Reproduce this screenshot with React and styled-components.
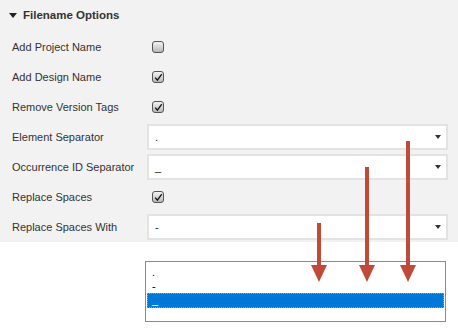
import React from "react";
import styled, { createGlobalStyle } from "styled-components";

const Global = createGlobalStyle`
  html, body {
    margin: 0;
    padding: 0;
    background: #ffffff;
  }
  body {
    font-family: "Liberation Sans", Arial, sans-serif;
  }
`;

const Page = styled.div`
  position: relative;
  width: 458px;
  height: 331px;
  overflow: hidden;
`;

const Panel = styled.div`
  background: #f2f2f2;
  padding: 0 10px 0 12px;
  height: 242px;
  box-sizing: border-box;
`;

const Header = styled.div`
  display: flex;
  align-items: center;
  height: 32px;
  padding-bottom: 2px;
  box-sizing: border-box;
  margin-left: -3px;
  gap: 6px;
  font-size: 11.5px;
  font-weight: bold;
  color: #333333;
`;

const Caret = styled.span`
  width: 0;
  height: 0;
  border-left: 4px solid transparent;
  border-right: 4px solid transparent;
  border-top: 5px solid #222222;
  margin-top: 1px;
`;

const Row = styled.div`
  display: grid;
  grid-template-columns: 135px 1fr;
  align-items: center;
  height: 30px;
`;

const Label = styled.span`
  font-size: 11px;
  color: #333333;
`;

const Check = styled.span`
  width: 12px;
  height: 12px;
  margin-left: 5px;
  box-sizing: border-box;
  border: 1px solid #555555;
  border-radius: 3px;
  background: linear-gradient(#f4f4f4, #b8b8b8);
  display: flex;
  align-items: center;
  justify-content: center;
`;

const Select = styled.div`
  height: 26px;
  box-sizing: border-box;
  border: 2px solid #e3e3e3;
  background: #ffffff;
  display: flex;
  align-items: center;
  justify-content: space-between;
  padding: 0 5px 0 6px;
  font-size: 11px;
  color: #222222;
`;

const Arrow = styled.span`
  width: 0;
  height: 0;
  border-left: 3.5px solid transparent;
  border-right: 3.5px solid transparent;
  border-top: 4px solid #333333;
`;

const ListArea = styled.div`
  padding: 19px 0 0 145px;
`;

const ListBox = styled.div`
  width: 301px;
  height: 61px;
  box-sizing: border-box;
  border: 1px solid #8a8a8a;
  background: #ffffff;
  padding: 3px 1px;
  display: flex;
  flex-direction: column;
`;

const Option = styled.div`
  height: ${p => (p.selected ? "15px" : "14px")};
  box-sizing: border-box;
  padding-left: 4px;
  font-size: 11px;
  line-height: 13px;
  color: ${p => (p.selected ? "#ffffff" : "#000000")};
  background: ${p => (p.selected ? "#0078d7" : "transparent")};
  border: ${p => (p.selected ? "1px dotted #f08a24" : "1px solid transparent")};
`;

const Overlay = styled.svg`
  position: absolute;
  left: 0;
  top: 0;
  pointer-events: none;
`;

const Tick = () => (
  <svg width="9" height="9" viewBox="0 0 9 9">
    <path d="M1.2 4.6 L3.4 7.2 L7.8 1.2" fill="none" stroke="#111" strokeWidth="1.3" />
  </svg>
);

const rows = [
  { label: "Add Project Name", type: "check", checked: false },
  { label: "Add Design Name", type: "check", checked: true },
  { label: "Remove Version Tags", type: "check", checked: true },
  { label: "Element Separator", type: "select", value: "." },
  { label: "Occurrence ID Separator", type: "select", value: "_" },
  { label: "Replace Spaces", type: "check", checked: true },
  { label: "Replace Spaces With", type: "select", value: "-" }
];

const arrows = [
  { x: 319, top: 223 },
  { x: 367, top: 167 },
  { x: 408, top: 141 }
];

export default function App() {
  return (
    <Page>
      <Global />
      <Panel>
        <Header>
          <Caret />
          Filename Options
        </Header>
        {rows.map(r => (
          <Row key={r.label}>
            <Label>{r.label}</Label>
            {r.type === "check" ? (
              <Check>{r.checked && <Tick />}</Check>
            ) : (
              <Select>
                <span>{r.value}</span>
                <Arrow />
              </Select>
            )}
          </Row>
        ))}
      </Panel>
      <ListArea>
        <ListBox>
          <Option>.</Option>
          <Option>-</Option>
          <Option selected>_</Option>
        </ListBox>
      </ListArea>
      <Overlay width="458" height="331">
        {arrows.map(a => (
          <g key={a.x} fill="#c0493a">
            <rect x={a.x - 2} y={a.top} width="4" height={266 - a.top} />
            <polygon points={`${a.x - 8},265 ${a.x + 8},265 ${a.x},282`} />
          </g>
        ))}
      </Overlay>
    </Page>
  );
}
